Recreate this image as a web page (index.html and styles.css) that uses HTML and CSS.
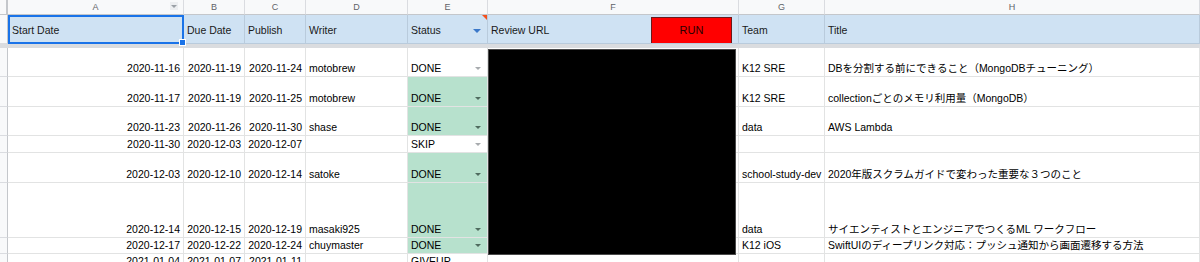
FILE: index.html
```html
<!DOCTYPE html>
<html lang="ja">
<head>
<meta charset="utf-8">
<title>Sheet</title>
<link rel="stylesheet" href="styles.css">
</head>
<body>
<div class="wrap">
  <div class="sheet">
    <!-- column headers -->
    <div class="corner"></div>
    <div class="ch cha">A<span class="filter"><span class="tri"></span></span></div>
    <div class="ch">B</div>
    <div class="ch">C</div>
    <div class="ch">D</div>
    <div class="ch">E</div>
    <div class="ch">F</div>
    <div class="ch">G</div>
    <div class="ch">H</div>

    <!-- row 1 -->
    <div class="rh"></div>
    <div class="h sel">Start Date</div>
    <div class="h">Due Date</div>
    <div class="h">Publish</div>
    <div class="h">Writer</div>
    <div class="h hstatus">Status<span class="dd blue"></span><span class="note"></span></div>
    <div class="h hurl"><span>Review URL</span><span class="run">RUN</span></div>
    <div class="h">Team</div>
    <div class="h">Title</div>

    <div class="freeze"></div>

    <!-- row 2 -->
    <div class="rh"></div>
    <div class="c r">2020-11-16</div>
    <div class="c r">2020-11-19</div>
    <div class="c r">2020-11-24</div>
    <div class="c">motobrew</div>
    <div class="c st"><span>DONE</span><span class="dd"></span></div>
    <div class="c"></div>
    <div class="c">K12 SRE</div>
    <div class="c">DBを分割する前にできること（MongoDBチューニング）</div>

    <!-- row 3 -->
    <div class="rh"></div>
    <div class="c r">2020-11-17</div>
    <div class="c r">2020-11-19</div>
    <div class="c r">2020-11-25</div>
    <div class="c">motobrew</div>
    <div class="c st g"><span>DONE</span><span class="dd dk"></span></div>
    <div class="c"></div>
    <div class="c">K12 SRE</div>
    <div class="c">collectionごとのメモリ利用量（MongoDB）</div>

    <!-- row 4 -->
    <div class="rh"></div>
    <div class="c r">2020-11-23</div>
    <div class="c r">2020-11-26</div>
    <div class="c r">2020-11-30</div>
    <div class="c">shase</div>
    <div class="c st g"><span>DONE</span><span class="dd dk"></span></div>
    <div class="c"></div>
    <div class="c">data</div>
    <div class="c">AWS Lambda</div>

    <!-- row 5 -->
    <div class="rh"></div>
    <div class="c r">2020-11-30</div>
    <div class="c r">2020-12-03</div>
    <div class="c r">2020-12-07</div>
    <div class="c"></div>
    <div class="c st"><span>SKIP</span><span class="dd"></span></div>
    <div class="c"></div>
    <div class="c"></div>
    <div class="c"></div>

    <!-- row 6 -->
    <div class="rh"></div>
    <div class="c r">2020-12-03</div>
    <div class="c r">2020-12-10</div>
    <div class="c r">2020-12-14</div>
    <div class="c">satoke</div>
    <div class="c st g"><span>DONE</span><span class="dd dk"></span></div>
    <div class="c"></div>
    <div class="c">school-study-dev</div>
    <div class="c">2020年版スクラムガイドで変わった重要な３つのこと</div>

    <!-- row 7 -->
    <div class="rh"></div>
    <div class="c r">2020-12-14</div>
    <div class="c r">2020-12-15</div>
    <div class="c r">2020-12-19</div>
    <div class="c">masaki925</div>
    <div class="c st g"><span>DONE</span><span class="dd dk"></span></div>
    <div class="c"></div>
    <div class="c">data</div>
    <div class="c">サイエンティストとエンジニアでつくるML ワークフロー</div>

    <!-- row 8 -->
    <div class="rh"></div>
    <div class="c r">2020-12-17</div>
    <div class="c r">2020-12-22</div>
    <div class="c r">2020-12-24</div>
    <div class="c">chuymaster</div>
    <div class="c st g"><span>DONE</span><span class="dd dk"></span></div>
    <div class="c"></div>
    <div class="c">K12 iOS</div>
    <div class="c">SwiftUIのディープリンク対応：プッシュ通知から画面遷移する方法</div>

    <!-- row 9 -->
    <div class="rh"></div>
    <div class="c r">2021-01-04</div>
    <div class="c r">2021-01-07</div>
    <div class="c r">2021-01-11</div>
    <div class="c"></div>
    <div class="c st"><span>GIVEUP</span></div>
    <div class="c"></div>
    <div class="c"></div>
    <div class="c"></div>
  </div>
  <div class="redact"></div>
</div>
</body>
</html>
```

FILE: styles.css
```css
html, body {
  margin: 0;
  padding: 0;
  background: #fff;
}

body {
  font-family: "Liberation Sans", Arial, "Noto Sans CJK JP", sans-serif;
  font-size: 10.5px;
  color: #000;
  overflow: hidden;
}

.wrap {
  position: relative;
  width: 1200px;
  height: 262px;
  overflow: hidden;
}

.sheet {
  display: grid;
  grid-template-columns: 8px 176px 61px 61px 102px 80px 251px 86px 375px;
  grid-template-rows: 15px 29px 4px 29px 30px 29px 17px 30px 55px 16px 16px;
}

.sheet > div {
  box-sizing: border-box;
  white-space: nowrap;
  overflow: hidden;
}

.corner {
  background: #f8f9fa;
  border-right: 2px solid #c4c7cb;
  border-bottom: 1px solid #c4c7cb;
}

.ch {
  background: #f8f9fa;
  color: #5f6368;
  font-size: 9px;
  display: flex;
  align-items: center;
  justify-content: center;
  border-right: 1px solid #dadce0;
  border-bottom: 1px solid #c4c7cb;
}

.cha {
  position: relative;
}

.filter {
  position: absolute;
  right: 5px;
  top: 2px;
  width: 8px;
  height: 8px;
  background: #eceef0;
  display: flex;
  align-items: center;
  justify-content: center;
}

.tri {
  width: 0;
  height: 0;
  border-left: 3px solid transparent;
  border-right: 3px solid transparent;
  border-top: 3px solid #9aa0a6;
}

.rh {
  background: #f8f9fa;
  border-right: 1px solid #c4c7cb;
  border-bottom: 1px solid #dadce0;
}

.h {
  background: #cfe2f3;
  display: flex;
  align-items: center;
  padding: 1px 3px 0;
  border-right: 1px solid #b9cbdc;
  border-bottom: 1px solid #b9cbdc;
  color: #1a1a1a;
}

.sel {
  position: relative;
  overflow: visible !important;
  border: 2px solid #1a73e8;
  padding-left: 2px;
}

.sel::after {
  content: "";
  position: absolute;
  right: -4px;
  bottom: -4px;
  width: 5px;
  height: 5px;
  background: #1a73e8;
  border: 1px solid #fff;
  z-index: 2;
}

.hstatus {
  position: relative;
  justify-content: space-between;
  padding-right: 6px;
}

.note {
  position: absolute;
  top: 0;
  right: 0;
  width: 0;
  height: 0;
  border-left: 5px solid transparent;
  border-top: 5px solid #f4511e;
}

.hurl {
  justify-content: space-between;
  padding-right: 6px;
}

.run {
  width: 81px;
  height: 27px;
  box-sizing: border-box;
  background: #ff0000;
  border: 1px solid #6b1a1a;
  color: #2a0000;
  display: flex;
  align-items: center;
  justify-content: center;
  font-size: 11px;
  margin-top: 1px;
}

.freeze {
  grid-column: 1 / -1;
  background: #dadcdf;
}

.c {
  display: flex;
  align-items: flex-end;
  padding: 0 3px 2px;
  border-right: 1px solid #e2e3e3;
  border-bottom: 1px solid #e2e3e3;
  line-height: 12px;
}

.r {
  justify-content: flex-end;
}

.st {
  justify-content: space-between;
  padding-right: 6px;
}

.g {
  background: #b7e1cd;
}

.dd {
  width: 0;
  height: 0;
  border-left: 3px solid transparent;
  border-right: 3px solid transparent;
  border-top: 3px solid #a8abae;
  margin-bottom: 4px;
}

.dd.dk {
  border-top-color: #4f6b5e;
}

.dd.blue {
  border-left-width: 4px;
  border-right-width: 4px;
  border-top: 4px solid #3b78c9;
  margin: 2px 0 0;
}

.redact {
  position: absolute;
  left: 488px;
  top: 49px;
  width: 248px;
  height: 206px;
  box-sizing: border-box;
  background: #000;
  border: 1px solid #4a4a4a;
}
```
